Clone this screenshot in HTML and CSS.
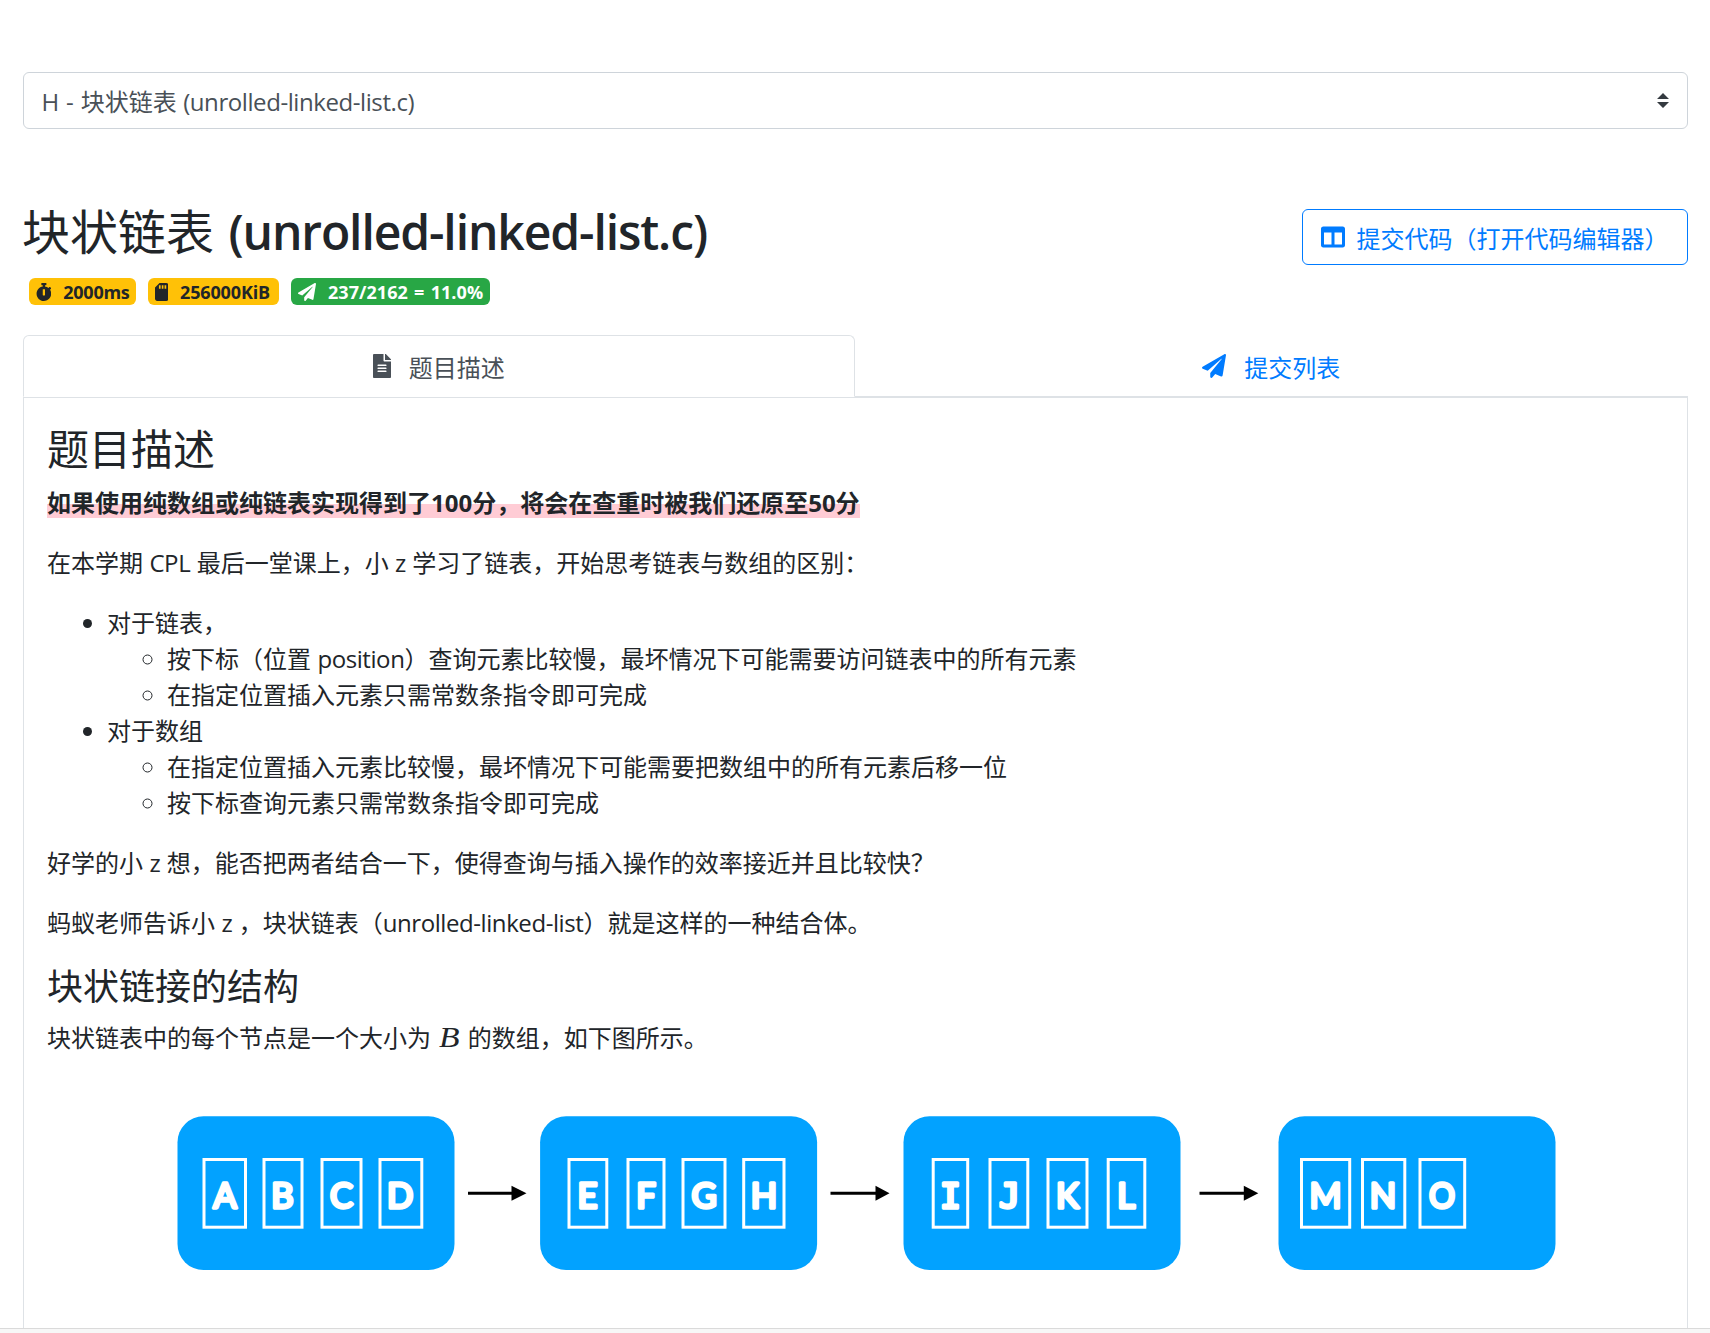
FILE: index.html
```html
<!DOCTYPE html>
<html lang="zh-CN">
<head>
<meta charset="utf-8">
<title>块状链表 (unrolled-linked-list.c)</title>
<link rel="stylesheet" href="styles.css">
</head>
<body>
<main class="page">
  <div class="problem-select">
    <span class="value"><span class="lat prefix">H - </span>块状链表<span class="lat"> (unrolled-linked-list.c)</span></span>
    <svg class="caret" viewBox="0 0 4 5"><path fill="#343a40" d="M2 0L0 2h4zm0 5L0 3h4z"/></svg>
  </div>

  <header class="head">
    <div>
      <h1>块状链表<span class="title-lat"> (unrolled-linked-list.c)</span></h1>
      <div class="badges">
        <span class="badge warn"><svg class="ico w448" viewBox="0 0 448 512"><path d="M432 304c0 114.9-93.1 208-208 208S16 418.9 16 304c0-104 76.3-190.2 176-205.5V64h-28c-6.6 0-12-5.4-12-12V12c0-6.6 5.4-12 12-12h120c6.6 0 12 5.4 12 12v40c0 6.6-5.4 12-12 12h-28v34.5c37.5 5.8 71.7 21.6 99.7 44.6l27.5-27.5c4.7-4.7 12.3-4.7 17 0l28.3 28.3c4.7 4.7 4.7 12.3 0 17l-29.4 29.4-.6.6C419.7 223.3 432 262.2 432 304zm-176 36V188.5c0-6.6-5.4-12-12-12h-40c-6.6 0-12 5.4-12 12V340c0 6.6 5.4 12 12 12h40c6.6 0 12-5.4 12-12z"/></svg><span>2000ms</span></span>
        <span class="badge warn"><svg class="ico w384" viewBox="0 0 384 512"><path d="M320 0H128L0 128v320c0 35.3 28.7 64 64 64h256c35.3 0 64-28.7 64-64V64c0-35.3-28.7-64-64-64zM160 160h-48V64h48v96zm80 0h-48V64h48v96zm80 0h-48V64h48v96z"/></svg><span>256000KiB</span></span>
        <span class="badge ok"><svg class="ico w512" viewBox="0 0 512 512"><path d="M476 3.2L12.5 270.6c-18.1 10.4-15.8 35.6 2.2 43.2L121 358.4l287.3-253.2c5.5-4.9 13.3 2.6 8.6 8.3L176 407v80.5c0 23.6 28.5 32.9 42.5 15.8L282 426l124.6 52.2c14.2 6 30.4-2.9 33-18.2l72-432C515 7.8 493.3-6.8 476 3.2z"/></svg><span>237/2162 = 11.0%</span></span>
      </div>
    </div>
    <a class="btn"><svg class="ico w512" viewBox="0 0 512 512"><path d="M464 32H48C21.49 32 0 53.49 0 80v352c0 26.51 21.49 48 48 48h416c26.51 0 48-21.49 48-48V80c0-26.51-21.49-48-48-48zM224 416H64V160h160v256zm224 0H288V160h160v256z"/></svg><span>提交代码（打开代码编辑器）</span></a>
  </header>

  <nav class="tabs">
    <a class="tab active"><svg class="ico w384" viewBox="0 0 384 512"><path d="M224 136V0H24C10.7 0 0 10.7 0 24v464c0 13.3 10.7 24 24 24h336c13.3 0 24-10.7 24-24V160H248c-13.2 0-24-10.8-24-24zm64 236c0 6.6-5.4 12-12 12H108c-6.6 0-12-5.4-12-12v-8c0-6.6 5.4-12 12-12h168c6.6 0 12 5.4 12 12v8zm0-64c0 6.6-5.4 12-12 12H108c-6.6 0-12-5.4-12-12v-8c0-6.6 5.4-12 12-12h168c6.6 0 12 5.4 12 12v8zm0-72v8c0 6.6-5.4 12-12 12H108c-6.6 0-12-5.4-12-12v-8c0-6.6 5.4-12 12-12h168c6.6 0 12 5.4 12 12zm96-114.1v6.1H256V0h6.1c6.4 0 12.5 2.5 17 7l97.9 98c4.5 4.5 7 10.6 7 16.9z"/></svg><span>题目描述</span></a>
    <a class="tab"><svg class="ico w512" viewBox="0 0 512 512"><path d="M476 3.2L12.5 270.6c-18.1 10.4-15.8 35.6 2.2 43.2L121 358.4l287.3-253.2c5.5-4.9 13.3 2.6 8.6 8.3L176 407v80.5c0 23.6 28.5 32.9 42.5 15.8L282 426l124.6 52.2c14.2 6 30.4-2.9 33-18.2l72-432C515 7.8 493.3-6.8 476 3.2z"/></svg><span>提交列表</span></a>
  </nav>

  <article class="card">
    <h2>题目描述</h2>
    <p><strong class="mark">如果使用纯数组或纯链表实现得到了100分，将会在查重时被我们还原至50分</strong></p>
    <p>在本学期<span class="lat"> CPL </span>最后一堂课上，小<span class="lat"> z </span>学习了链表，开始思考链表与数组的区别：</p>
    <ul>
      <li>对于链表，
        <ul>
          <li>按下标（位置<span class="lat"> position</span>）查询元素比较慢，最坏情况下可能需要访问链表中的所有元素</li>
          <li>在指定位置插入元素只需常数条指令即可完成</li>
        </ul>
      </li>
      <li>对于数组
        <ul>
          <li>在指定位置插入元素比较慢，最坏情况下可能需要把数组中的所有元素后移一位</li>
          <li>按下标查询元素只需常数条指令即可完成</li>
        </ul>
      </li>
    </ul>
    <p>好学的小<span class="lat"> z </span>想，能否把两者结合一下，使得查询与插入操作的效率接近并且比较快？</p>
    <p>蚂蚁老师告诉小<span class="lat"> z </span>，块状链表（<span class="lat">unrolled-linked-list</span>）就是这样的一种结合体。</p>
    <h3>块状链接的结构</h3>
    <p>块状链表中的每个节点是一个大小为 <i class="math">B</i> 的数组，如下图所示。</p>
    <svg class="diagram" viewBox="47.5 1078 1615 250">
      <g fill="#02a2ff">
        <rect x="178" y="1116.3" width="277" height="153.7" rx="26"/>
        <rect x="540.6" y="1116.3" width="277" height="153.7" rx="26"/>
        <rect x="904" y="1116.3" width="277" height="153.7" rx="26"/>
        <rect x="1279" y="1116.3" width="277" height="153.7" rx="26"/>
      </g>
      <g fill="none" stroke="#fff" stroke-width="3">
        <rect x="204.5" y="1159.5" width="41.5" height="67.7"/>
        <rect x="264.5" y="1159.5" width="38" height="67.7"/>
        <rect x="322.5" y="1159.5" width="39" height="67.7"/>
        <rect x="380.5" y="1159.5" width="41.8" height="67.7"/>
        <rect x="569.5" y="1159.5" width="37.8" height="67.7"/>
        <rect x="628.5" y="1159.5" width="36" height="67.7"/>
        <rect x="683.5" y="1159.5" width="42" height="67.7"/>
        <rect x="744.2" y="1159.5" width="40.3" height="67.7"/>
        <rect x="933.7" y="1159.5" width="34.5" height="67.7"/>
        <rect x="990.5" y="1159.5" width="37.8" height="67.7"/>
        <rect x="1048.5" y="1159.5" width="39" height="67.7"/>
        <rect x="1108.7" y="1159.5" width="36.6" height="67.7"/>
        <rect x="1302" y="1159.5" width="48.2" height="67.7"/>
        <rect x="1363" y="1159.5" width="42.3" height="67.7"/>
        <rect x="1420.5" y="1159.5" width="44.7" height="67.7"/>
      </g>
      <g class="letters">
        <text x="225.5" y="1208">A</text><text x="283" y="1208">B</text><text x="342" y="1208">C</text><text x="400.5" y="1208">D</text>
        <text x="588" y="1208">E</text><text x="646.5" y="1208">F</text><text x="704.5" y="1208">G</text><text x="764.5" y="1208">H</text>
        <text class="slab" x="951" y="1208">I</text><text class="slab" x="1010" y="1208">J</text><text x="1068" y="1208">K</text><text x="1126.5" y="1208">L</text>
        <text x="1326" y="1208">M</text><text x="1383.5" y="1208">N</text><text x="1442.5" y="1208" textLength="26" lengthAdjust="spacingAndGlyphs">O</text>
      </g>
      <g fill="#000">
        <path d="M468.5 1191.8H512v-6l15 7.5-15 7.5v-6H468.5z"/>
        <path d="M831 1191.8h45v-6l14 7.5-14 7.5v-6h-45z"/>
        <path d="M1200 1191.8h44.3v-6l14.5 7.5-14.5 7.5v-6H1200z"/>
      </g>
    </svg>
  </article>
</main>
<footer class="statusbar"></footer>
</body>
</html>
```
FILE: styles.css
```css
* { box-sizing: border-box; }
body {
  margin: 0;
  height: 1333px;
  overflow: hidden;
  display: flex;
  flex-direction: column;
  background: #fff;
  color: #212529;
  font: 400 24px/36px "Open Sans", "Noto Sans CJK SC", sans-serif;
}
.page {
  flex: 1;
  min-height: 0;
  overflow: hidden;
  padding: 72px 22.5px 0;
  display: flex;
  flex-direction: column;
}
.statusbar { flex: none; height: 5px; background: #f7f7f7; border-top: 1px solid #dadada; }
.ico { flex: none; fill: currentColor; height: 1em; }
.w384 { width: .75em; }
.w448 { width: .875em; }
.w512 { width: 1em; }
.lat { letter-spacing: -.42px; word-spacing: .6px; }
.prefix { word-spacing: 1.5px; }

.problem-select {
  flex: none;
  height: 57px;
  padding: 0 18px;
  border: 1px solid #ced4da;
  border-radius: 6px;
  color: #495057;
  display: flex;
  align-items: center;
  justify-content: space-between;
}
.value { padding-top: 2px; }
.caret { width: 12px; height: 15px; margin-top: -1px; }

.head {
  flex: none;
  height: 134px;
  margin-top: 72px;
  display: flex;
  justify-content: space-between;
  align-items: flex-start;
}
h1, h2, h3 { font-weight: 400; line-height: 1.2; margin: 0 0 12px; }
h1 { font-size: 48px; margin: 2px 0 0 -.5px; }
.title-lat { font-weight: 600; letter-spacing: -1.1px; word-spacing: 3px; }
.badges { display: flex; gap: 12px; margin: 17px 0 0 6px; }
.badge {
  display: flex;
  align-items: center;
  gap: 12px;
  height: 27px;
  padding: 1px 7px 0;
  border-radius: 6px;
  font-size: 18px;
  font-weight: 700;
  line-height: 26px;
}
.warn { background: #ffc107; letter-spacing: -.25px; }
.warn:first-child { padding-right: 6px; }
.warn + .warn { padding-right: 9px; letter-spacing: -.15px; }
.ok { background: #28a745; color: #fff; letter-spacing: .05px; word-spacing: 1.5px; }
.btn {
  display: flex;
  align-items: center;
  gap: 12px;
  height: 56px;
  margin-top: 8px;
  padding: 0 18px;
  border: 1px solid #007bff;
  border-radius: 6px;
  color: #007bff;
}
.btn span, .tab span { padding-top: 3px; }

.tabs { flex: none; display: flex; height: 62px; border-bottom: 1px solid #dee2e6; }
.tab {
  flex: 1;
  height: 62px;
  display: flex;
  align-items: center;
  justify-content: center;
  gap: 18px;
  border: 1px solid transparent;
  border-radius: 6px 6px 0 0;
  color: #007bff;
}
.tab.active { color: #495057; background: #fff; border-color: #dee2e6 #dee2e6 #fff; }

.card { flex: 1; min-height: 0; padding: 26px 24px 0 23.5px; border: 1px solid #dee2e6; border-bottom: 0; }
h2 { font-size: 42px; margin-bottom: 10.6px; }
h3 { font-size: 36px; }
p { margin: 0 0 24px; }
ul { margin: 0 0 24px; padding-left: 60px; }
ul ul { margin: 0; }
.mark { font-weight: 700; background: linear-gradient(transparent 55%, #ffccd5 55% 96%, transparent 96%); }
.math {
  display: inline-block;
  margin: 0 3px;
  font: italic 30px/1 "Liberation Serif", serif;
  transform: scaleX(1.12);
}
.diagram { display: block; width: 1615px; height: 250px; margin-top: -2.5px; }
.letters {
  fill: #fff;
  stroke: #fff;
  stroke-width: 3.4;
  stroke-linejoin: round;
  font: 400 34.5px Lato, sans-serif;
  text-anchor: middle;
}
.slab { font-family: "DejaVu Sans Mono", monospace; }
```
